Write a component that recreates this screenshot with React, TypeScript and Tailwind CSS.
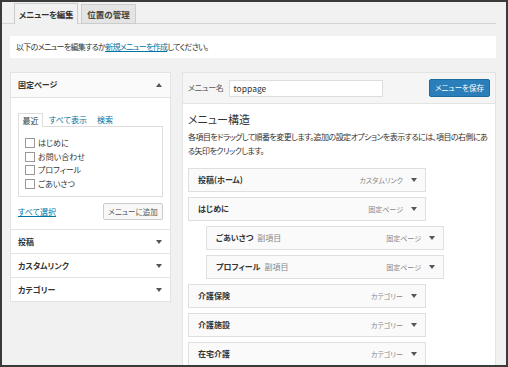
import React from 'react';

const font = {
  fontFamily: '"Noto Sans CJK JP", "Noto Sans", sans-serif',
  fontFeatureSettings: '"palt"',
};

const Down: React.FC = () => (
  <svg width="6" height="4" viewBox="0 0 6 4" className="shrink-0">
    <path d="M0 0h6L3 4z" fill="#555" />
  </svg>
);

const Up: React.FC = () => (
  <svg width="6" height="4" viewBox="0 0 6 4" className="shrink-0">
    <path d="M0 4h6L3 0z" fill="#555" />
  </svg>
);

type Item = { title: string; sub?: boolean; type: string };

const items: Item[] = [
  { title: '投稿(ホーム)', type: 'カスタムリンク' },
  { title: 'はじめに', type: '固定ページ' },
  { title: 'ごあいさつ', sub: true, type: '固定ページ' },
  { title: 'プロフィール', sub: true, type: '固定ページ' },
  { title: '介護保険', type: 'カテゴリー' },
  { title: '介護施設', type: 'カテゴリー' },
  { title: '在宅介護', type: 'カテゴリー' },
];

const pages = ['はじめに', 'お問い合わせ', 'プロフィール', 'ごあいさつ'];

const App: React.FC = () => {
  return (
    <div
      style={font}
      className="w-[508px] h-[367px] border-2 border-[#3a3a3a] bg-[#f1f1f1] overflow-hidden text-[#333] text-[8px]"
    >
      {/* tabs */}
      <div className="mt-px mr-[10px] pl-[12px] flex items-end h-[21px] border-b border-[#d4d4d4]">
        <div className="w-[64px] h-[21px] -mb-px border border-b-0 border-[#ccc] bg-[#f1f1f1] flex items-center justify-center font-bold text-[8.5px] tracking-[-0.3px]">
          メニューを編集
        </div>
        <div className="ml-[3px] w-[55px] h-[20px] -mb-px border border-[#ccc] bg-[#e4e4e4] flex items-center justify-center font-bold text-[8.5px] text-[#444]">
          位置の管理
        </div>
      </div>

      {/* notice */}
      <div className="mt-[12px] ml-[8px] mr-[10px] h-[22px] bg-white flex items-center pl-[6px] tracking-[-0.7px]">
        以下のメニューを編集するか
        <a className="text-[#0074a2] underline">新規メニューを作成</a>
        してください。
      </div>

      <div className="mt-[14px] ml-[8px] mr-[10px] flex gap-[11px] items-start">
        {/* left column */}
        <div className="w-[161px] border border-[#e3e3e3] bg-white">
          <div className="h-[25px] bg-[#fafafa] border-b border-[#e3e3e3] flex items-center justify-between pl-[7px] pr-[8px] font-bold">
            固定ページ
            <Up />
          </div>
          <div className="px-[7px] pt-[15px] pb-[9px]">
            <div className="flex items-end h-[13px] gap-[6px]">
              <div className="w-[25px] h-[14px] -mb-px border border-b-0 border-[#ddd] bg-white flex items-center justify-center">
                最近
              </div>
              <span className="text-[#0074a2] leading-[13px]">すべて表示</span>
              <span className="ml-[4px] text-[#0074a2] leading-[13px]">検索</span>
            </div>
            <div className="h-[71px] border border-[#ddd] pt-[9px] pl-[6px]">
              {pages.map((p) => (
                <div key={p} className="flex items-center gap-[3px] h-[13.7px]">
                  <span className="w-[10px] h-[10px] border border-[#999] bg-white shrink-0" />
                  {p}
                </div>
              ))}
            </div>
            <div className="mt-[6px] flex items-center justify-between">
              <a className="text-[#0074a2] underline">すべて選択</a>
              <button className="w-[60px] h-[17px] border border-[#ccc] bg-[#f7f7f7] rounded-[2px] text-[7.5px] text-[#555]">
                メニューに追加
              </button>
            </div>
          </div>
          {['投稿', 'カスタムリンク', 'カテゴリー'].map((t) => (
            <div
              key={t}
              className="h-[24px] border-t border-[#e3e3e3] flex items-center justify-between pl-[7px] pr-[8px] font-bold"
            >
              {t}
              <Down />
            </div>
          ))}
        </div>

        {/* right column */}
        <div className="w-[314px] h-[300px] border border-[#e3e3e3] border-b-0 bg-white">
          <div className="h-[31px] bg-[#f5f5f5] border-b border-[#e3e3e3] flex items-center pl-[5px] pr-[5px]">
            <span className="text-[#555] tracking-[-0.3px]">メニュー名</span>
            <div className="ml-[5px] w-[154px] h-[17px] border border-[#ddd] bg-white flex items-center pl-[4px] text-[8.5px]">
              toppage
            </div>
            <button className="ml-auto w-[61px] h-[18px] rounded-[2px] bg-[#2a7fba] border border-[#1d6a9e] text-white text-[7.5px]">
              メニューを保存
            </button>
          </div>
          <div className="px-[5px] pt-[8px]">
            <div className="text-[11px] leading-[14px]">メニュー構造</div>
            <p className="mt-[4px] leading-[14px] whitespace-nowrap tracking-[-0.55px]">
              各項目をドラッグして順番を変更します。追加の設定オプションを表示するには、項目の右側にあ
              <br />
              る矢印をクリックします。
            </p>
            <div className="mt-[10px] flex flex-col gap-[5px]">
              {items.map((it) => (
                <div
                  key={it.title}
                  className={`h-[24px] w-[238px] shrink-0 border border-[#dfdfdf] bg-[#fafafa] flex items-center pl-[9px] pr-[8px] ${
                    it.sub ? 'ml-[18px]' : ''
                  }`}
                >
                  <span className="font-bold">{it.title}</span>
                  {it.sub && <span className="ml-[4px] text-[#888]">副項目</span>}
                  <span className="ml-auto mr-[8px] text-[7px] text-[#888]">{it.type}</span>
                  <Down />
                </div>
              ))}
            </div>
          </div>
        </div>
      </div>
    </div>
  );
};

export default App;
